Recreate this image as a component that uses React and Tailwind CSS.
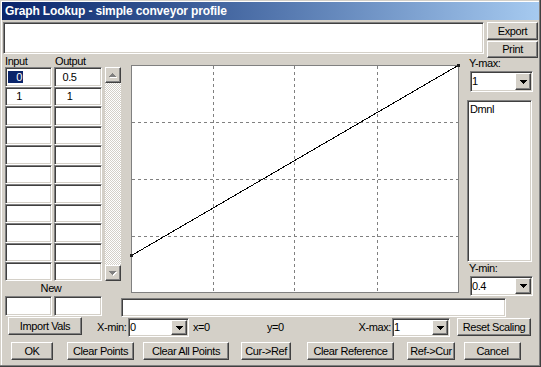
const sunken =
  "bg-white border border-t-[#808080] border-l-[#808080] border-b-white border-r-white shadow-[inset_1px_1px_0_#404040,inset_-1px_-1px_0_#d4d0c8]";
const raised =
  "bg-[#d4d0c8] border border-t-white border-l-white border-b-[#404040] border-r-[#404040] shadow-[inset_-1px_-1px_0_#808080,inset_1px_1px_0_#d4d0c8]";

function Btn({ className, children }) {
  return (
    <div className={`${raised} flex items-center justify-center leading-none whitespace-nowrap ${className}`}>
      {children}
    </div>
  );
}

function DownArrow() {
  return (
    <svg width="7" height="4" shapeRendering="crispEdges">
      <path d="M0 0h7v1H0zM1 1h5v1H1zM2 2h3v1H2zM3 3h1v1H3z" fill="#000" />
    </svg>
  );
}

function Combo({ value, className }) {
  return (
    <div className={`${sunken} p-[1px] flex items-stretch ${className}`}>
      <div className="flex-1 flex items-center leading-none">{value}</div>
      <div className={`${raised} w-[16px] flex items-center justify-center`}>
        <DownArrow />
      </div>
    </div>
  );
}

const rowHeights = ["h-[20px]", "h-[19px]", "h-[20px]", "h-[19px]", "h-[20px]", "h-[19px]", "h-[20px]", "h-[19px]", "h-[20px]", "h-[19px]", "h-[19px]"];
const rows = [["0", "0.5"], ["1", "1"]];

function Graph() {
  const vx = [82.5, 163.5, 246.5];
  const hy = [57.5, 114.5, 171.5];
  return (
    <svg width="328" height="228" shapeRendering="crispEdges" className="overflow-visible">
      <rect x="0.5" y="0.5" width="327" height="227" fill="#fff" stroke="#808080" />
      {vx.map((x) => (
        <line key={x} x1={x} y1="1" x2={x} y2="227" stroke="#808080" strokeDasharray="3 3" />
      ))}
      {hy.map((y) => (
        <line key={y} x1="1" y1={y} x2="327" y2={y} stroke="#808080" strokeDasharray="3 3" />
      ))}
      <line x1="0.5" y1="190.5" x2="327" y2="0.5" stroke="#000" />
      <rect x="-1" y="189" width="3" height="3" fill="#202020" />
      <rect x="326" y="-1" width="3" height="3" fill="#202020" />
    </svg>
  );
}

function ScrollArrow({ up }) {
  return (
    <div className={`${raised} w-[16px] h-[16px] flex items-center justify-center`}>
      {up ? (
        <svg width="8" height="5" shapeRendering="crispEdges">
          <path d="M4 1h1v1H4zM3 2h3v1H3zM2 3h5v1H2zM1 4h7v1H1z" fill="#fff" />
          <path d="M3 0h1v1H3zM2 1h3v1H2zM1 2h5v1H1zM0 3h7v1H0z" fill="#808080" />
        </svg>
      ) : (
        <svg width="8" height="5" shapeRendering="crispEdges">
          <path d="M1 1h7v1H1zM2 2h5v1H2zM3 3h3v1H3zM4 4h1v1H4z" fill="#fff" />
          <path d="M0 0h7v1H0zM1 1h5v1H1zM2 2h3v1H2zM3 3h1v1H3z" fill="#808080" />
        </svg>
      )}
    </div>
  );
}

export default function App() {
  return (
    <div className="w-[541px] h-[367px] bg-[#d4d0c8] flex flex-col overflow-hidden font-['Liberation_Sans',Arial,sans-serif] text-[11px] tracking-[-0.4px] text-black shadow-[inset_-1px_-1px_0_#404040,inset_-2px_-2px_0_#808080,inset_1px_1px_0_#d4d0c8,inset_2px_2px_0_#ffffff]">
      {/* title bar */}
      <div className="mx-[2px] mt-[2px] h-[18px] bg-linear-to-r from-[#0a246a] to-[#a6caf0] flex items-center pl-[3px]">
        <span className="text-white font-bold text-[12px] tracking-[-0.15px] leading-none">
          Graph Lookup - simple conveyor profile
        </span>
      </div>

      {/* comment box + export/print */}
      <div className="mt-[2px] h-[33px] flex items-start">
        <div className={`${sunken} ml-[3px] w-[481px] h-[32px]`} />
        <div className="ml-[3px] w-[51px] flex flex-col">
          <Btn className="h-[18px]">Export</Btn>
          <Btn className="mt-[1px] h-[17px]">Print</Btn>
        </div>
      </div>

      {/* body */}
      <div className="h-[262px] flex items-start">
        <div className="ml-[5px] w-[97px] flex flex-col">
          <div className="h-[12px] leading-[12px] flex">
            <span className="w-[50px]">Input</span>
            <span>Output</span>
          </div>
          <div className="flex flex-col">
            {rowHeights.map((h, i) => {
              const r = rows[i];
              return (
                <div key={i} className={`${h} grid grid-cols-[47px_48px] gap-x-[2px]`}>
                  <div className={`${sunken} p-[1px] flex items-center`}>
                    {r && i === 0 && (
                      <span className="ml-[1px] w-[15px] h-[12px] bg-[#0a246a] text-white text-right pr-[1px] leading-[12px]">
                        {r[0]}
                      </span>
                    )}
                    {r && i !== 0 && <span className="w-[24px] text-center leading-none">{r[0]}</span>}
                  </div>
                  <div className={`${sunken} p-[1px] flex items-center`}>
                    {r && <span className="w-[27px] text-center leading-none">{r[1]}</span>}
                  </div>
                </div>
              );
            })}
          </div>
          <div className="h-[15px] leading-[15px] text-center pr-[5px]">New</div>
          <div className="h-[20px] grid grid-cols-[47px_48px] gap-x-[2px]">
            <div className={sunken} />
            <div className={sunken} />
          </div>
        </div>

        <div className="ml-[3px] flex flex-col">
          <div className="h-[241px] flex items-start">
            <div className="mt-[12px] w-[16px] h-[214px] flex flex-col justify-between bg-[repeating-conic-gradient(#ffffff_0%_25%,#d4d0c8_0%_50%)] bg-[length:2px_2px]">
              <ScrollArrow up />
              <ScrollArrow />
            </div>
            <div className="ml-[10px] mt-[10px] w-[328px] h-[228px]">
              <Graph />
            </div>
            <div className="ml-[8px] w-[66px] flex flex-col">
              <div className="mt-[2px] h-[12px] leading-[12px] pl-[2px]">Y-max:</div>
              <Combo value="1" className="mt-[2px] ml-[3px] w-[63px] h-[21px]" />
              <div className={`${sunken} mt-[8px] w-[65px] h-[162px] pl-[2px] pt-[1px] leading-[14px]`}>
                Dmnl
              </div>
              <div className="h-[12px] leading-[12px] pl-[2px]">Y-min:</div>
              <Combo value="0.4" className="mt-[2px] ml-[3px] w-[63px] h-[20px]" />
            </div>
          </div>
          <div className={`${sunken} mt-[2px] ml-[16px] w-[385px] h-[19px]`} />
        </div>
      </div>

      {/* scaling row */}
      <div className="h-[20px] flex items-start whitespace-nowrap">
        <Btn className="ml-[8px] w-[74px] h-[18px]">Import Vals</Btn>
        <span className="ml-[15px] w-[31px] leading-[18px] mt-[1px]">X-min:</span>
        <Combo value="0" className="mt-[1px] w-[61px] h-[19px]" />
        <span className="ml-[4px] w-[74px] leading-[18px] mt-[1px]">x=0</span>
        <span className="w-[86px] leading-[18px] mt-[1px]">y=0</span>
        <span className="w-[39px] leading-[18px] mt-[1px] text-right pr-[1px]">X-max:</span>
        <Combo value="1" className="mt-[1px] w-[58px] h-[19px]" />
        <Btn className="ml-[7px] mt-[1px] w-[74px] h-[18px]">Reset Scaling</Btn>
      </div>

      {/* action buttons */}
      <div className="mt-[5px] h-[18px] flex">
        <Btn className="ml-[11px] w-[42px]">OK</Btn>
        <Btn className="ml-[14px] w-[67px]">Clear Points</Btn>
        <Btn className="ml-[9px] w-[86px]">Clear All Points</Btn>
        <Btn className="ml-[12px] w-[50px]">Cur-&gt;Ref</Btn>
        <Btn className="ml-[16px] w-[87px]">Clear Reference</Btn>
        <Btn className="ml-[13px] w-[48px]">Ref-&gt;Cur</Btn>
        <Btn className="ml-[9px] w-[57px]">Cancel</Btn>
      </div>
    </div>
  );
}
